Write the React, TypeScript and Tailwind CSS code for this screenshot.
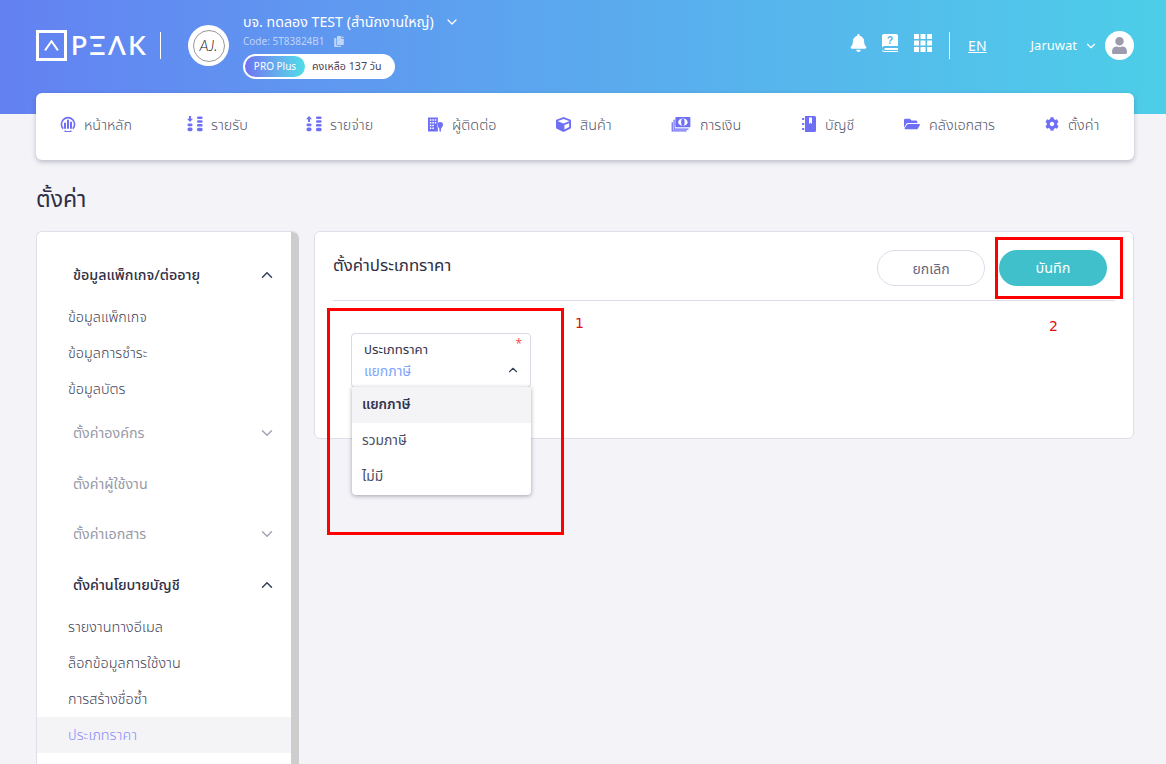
import { ChevronDown, ChevronUp } from 'lucide-react'
import { FaBell, FaCog, FaCopy, FaCube, FaFolderOpen, FaUser } from 'react-icons/fa'
import type { ReactNode } from 'react'

// nav icons that no package has in this shape
function Dashboard() {
  return (
    <svg viewBox="0 0 16 16" className="w-[16px] h-[16px]" fill="none" stroke="currentColor">
      <path d="M3.200 12.800a6.600 6.600 0 1 1 9.600 0" strokeWidth="1.600" />
      <path d="M4.500 14.800a7 7 0 0 0 7 0" strokeWidth="1.400" />
      <path d="M5 7.500v4.500M8 4.500V12M11 6.500V12" strokeWidth="2" strokeLinecap="round" />
    </svg>
  )
}

function Coins({ up }: { up?: boolean }) {
  return (
    <svg viewBox="0 0 16 16" className="w-[16px] h-[16px]" fill="currentColor">
      {up ? <path d="M3 0 6 3.200H4V6H2V3.200H0Z" /> : <path d="M2 0h2v2.800h2L3 6 0 2.800h2Z" />}
      <rect x="0.500" y="7.600" width="5" height="2.600" rx="1.200" />
      <rect x="0.500" y="11.600" width="5" height="3.600" rx="1.600" />
      <rect x="10" y="0.400" width="5.600" height="2.600" rx="1.200" />
      <rect x="10" y="4.200" width="5.600" height="2.600" rx="1.200" />
      <rect x="10" y="8" width="5.600" height="2.600" rx="1.200" />
      <rect x="10" y="11.800" width="5.600" height="3.400" rx="1.500" />
    </svg>
  )
}

function Building() {
  return (
    <svg viewBox="0 0 16 16" className="w-[15px] h-[15px]" fill="currentColor">
      <path fillRule="evenodd" d="M0 .5h10.500V7a3.600 3.600 0 0 0-.6 3.200l.6 1.600V15.500H0ZM2 2.500V4h1.600V2.500Zm2.600 0V4h1.600V2.500Zm2.600 0V4h1.600V2.500ZM2 5.400v1.500h1.600V5.400Zm2.600 0v1.500h1.600V5.400Zm2.600 0v1.500h1.600V5.400ZM2 8.300v1.500h1.600V8.300Zm2.600 0v1.500h1.600V8.300ZM2 11.200v1.500h1.600v-1.500Zm2.600 0v1.500h1.600v-1.500Z" />
      <path d="M13 5.200a3 3 0 0 1 3 3c0 1.800-1.600 3.200-2.200 4.200v3.100h-1.600v-3.100C11.600 11.400 10 10 10 8.200a3 3 0 0 1 3-3Z" />
    </svg>
  )
}

function Money() {
  return (
    <svg viewBox="0 0 20 16" className="w-[20px] h-[15px]">
      <rect x="4" y="0" width="16" height="11" rx="1" fill="currentColor" />
      <ellipse cx="12" cy="5.500" rx="5" ry="4" fill="#fff" />
      <ellipse cx="12" cy="5.500" rx="1.800" ry="4" fill="currentColor" />
      <path d="M2 3h1.300v9.200H18v1.300H2Z" fill="currentColor" />
      <path d="M0 5.500h1.300v8.700H16v1.300H0Z" fill="currentColor" />
    </svg>
  )
}

function Ledger() {
  return (
    <svg viewBox="0 0 14 16" className="w-[14px] h-[16px]" fill="currentColor">
      <path fillRule="evenodd" d="M3 0h9.500A1.500 1.500 0 0 1 14 1.500v13a1.500 1.500 0 0 1-1.500 1.500H3ZM7 1.500V8l1.500-1.200L10 8V1.500Z" />
      <rect x="0" y="2" width="2.200" height="2" rx=".6" />
      <rect x="0" y="7" width="2.200" height="2" rx=".6" />
      <rect x="0" y="12" width="2.200" height="2" rx=".6" />
    </svg>
  )
}

function HelpBook() {
  return (
    <svg viewBox="0 0 16 18" className="w-[16px] h-[18px]">
      <path d="M2 0h12a2 2 0 0 1 2 2v10H2.500a2.500 2.500 0 0 0 0 5H16v1H2.500A2.500 2.500 0 0 1 0 15.500V2a2 2 0 0 1 2-2Z" fill="#fff" />
      <rect x="2.500" y="14" width="13.500" height="2" fill="#fff" />
      <text x="8" y="9.500" textAnchor="middle" fontSize="10" fontWeight="700" fontFamily="'Liberation Sans', sans-serif" fill="#56b2ea">?</text>
    </svg>
  )
}

function Apps() {
  const cells = [0, 6.500, 13]
  return (
    <svg viewBox="0 0 18 18" className="w-[18px] h-[18px]" fill="#fff">
      {cells.map(y => cells.map(x => <rect key={`${x}-${y}`} x={x} y={y} width="5" height="5" />))}
    </svg>
  )
}

const navItems: { label: string; icon: ReactNode; width: string; gap: string }[] = [
  { label: 'หน้าหลัก', icon: <Dashboard />, width: 'w-[127px]', gap: 'gap-[8px]' },
  { label: 'รายรับ', icon: <Coins />, width: 'w-[119px]', gap: 'gap-[8px]' },
  { label: 'รายจ่าย', icon: <Coins up />, width: 'w-[122px]', gap: 'gap-[8px]' },
  { label: 'ผู้ติดต่อ', icon: <Building />, width: 'w-[128px]', gap: 'gap-[9px]' },
  { label: 'สินค้า', icon: <FaCube className="w-[15px] h-[15px]" />, width: 'w-[115px]', gap: 'gap-[9px]' },
  { label: 'การเงิน', icon: <Money />, width: 'w-[131px]', gap: 'gap-[9px]' },
  { label: 'บัญชี', icon: <Ledger />, width: 'w-[102px]', gap: 'gap-[9px]' },
  { label: 'คลังเอกสาร', icon: <FaFolderOpen className="w-[16px] h-[16px]" />, width: 'w-[141px]', gap: 'gap-[9px]' },
  { label: 'ตั้งค่า', icon: <FaCog className="w-[14px] h-[14px]" />, width: 'w-[70px]', gap: 'gap-[9px]' },
]

function SideHeader({ label, open, muted, height = 'h-[50px]' }: { label: string; open?: boolean; muted?: boolean; height?: string }) {
  return (
    <div className={`${height} pl-[36px] pr-[15px] flex items-center justify-between text-[14.3px] ${muted ? 'text-[#9a9aa8]' : 'text-[#2f2f45] font-medium'}`}>
      <span>{label}</span>
      {open === undefined ? null : open
        ? <ChevronUp className="w-[18px] h-[18px] text-[#35405c]" strokeWidth={2} />
        : <ChevronDown className="w-[18px] h-[18px] text-[#a4a4b4]" strokeWidth={2} />}
    </div>
  )
}

function SideItem({ label, active }: { label: string; active?: boolean }) {
  return (
    <div className={`h-[36px] pl-[31px] flex items-center text-[14.4px] font-light ${active ? 'mt-[-1px] bg-[#f4f4f7] text-[#8a8cf8]' : 'pb-[2px] text-[#3f3f55]'}`}>
      {label}
    </div>
  )
}

export default function App() {
  return (
    <div className="relative w-full h-screen overflow-hidden bg-[#f3f3f8] font-['Noto_Sans','Noto_Sans_Thai',sans-serif]">
      {/* Header */}
      <header className="h-[114px] pl-[36px] pr-[32px] flex items-start text-white bg-gradient-to-r from-[#6381f2] to-[#4ccee8]">
        <div className="mt-[30px] flex items-center">
          <div className="w-[31px] h-[31px] border-[3px] border-white flex items-center justify-center">
            <svg viewBox="0 0 14 10" className="w-[15px] h-[11px]" fill="none" stroke="#fff" strokeWidth="1.800"><path d="M1 9.500 7 1l6 8.500" /></svg>
          </div>
          <span aria-label="PEAK" className="ml-[4px] w-[80px] text-[26px] leading-[31px] tracking-[2.500px] font-semibold font-['Lato',sans-serif]">PΞΛK</span>
          <div className="ml-[9px] w-px h-[27px] bg-white" />
        </div>
        <div className="ml-[27px] mt-[25px] w-[41px] h-[41px] rounded-full bg-white flex items-center justify-center">
          <div className="w-[32px] h-[32px] rounded-full border border-[#999] flex items-center justify-center text-[#222] italic font-light text-[15px] font-['Lato',sans-serif]">AJ.</div>
        </div>
        <div className="ml-[14px] mt-[13px] flex flex-col">
          <div className="h-[18px] flex items-center text-[14.2px] leading-[18px]">
            <span>บจ. ทดลอง TEST (สำนักงานใหญ่)</span>
            <ChevronDown className="ml-[10px] w-[16px] h-[16px]" strokeWidth={2} />
          </div>
          <div className="mt-[3px] h-[14px] flex items-center text-[10px] text-white/60">
            <span>Code: 5T83824B1</span>
            <FaCopy className="ml-[9px] w-[10px] h-[11px]" />
          </div>
          <div className="mt-[6px] w-[152px] h-[25px] rounded-full bg-white flex items-center pl-[2px]">
            <span className="w-[60px] h-[21px] rounded-full bg-gradient-to-r from-[#6e72f0] to-[#4ddde6] flex items-center justify-center text-[10px]">PRO Plus</span>
            <span className="ml-[7px] text-[10.7px] text-[#45455c]">คงเหลือ 137 วัน</span>
          </div>
        </div>
        <div className="ml-auto mt-[31px] flex items-center">
          <div className="mb-[6px] flex items-center">
            <FaBell className="w-[17px] h-[18px]" />
            <div className="ml-[15px]"><HelpBook /></div>
            <div className="ml-[16px]"><Apps /></div>
          </div>
          <div className="ml-[17px] w-px h-[27px] bg-white" />
          <span className="ml-[18px] text-[14px] underline">EN</span>
          <span className="ml-[44px] text-[13px]">Jaruwat</span>
          <ChevronDown className="ml-[7px] w-[14px] h-[14px]" strokeWidth={2} />
          <div className="ml-[7px] w-[29px] h-[29px] rounded-full bg-white flex items-center justify-center text-[#9c9cae]">
            <FaUser className="w-[17px] h-[17px]" />
          </div>
        </div>
      </header>

      {/* Main nav */}
      <nav className="ml-[36px] mr-[32px] mt-[-21px] h-[67px] pb-[4px] pl-[24px] rounded-[6px] bg-white shadow-[0_2px_5px_rgba(60,60,90,0.3)] flex items-center relative">
        {navItems.map(item => (
          <div key={item.label} className={`${item.width} ${item.gap} shrink-0 flex items-center`}>
            <span className="text-[#6f6ff6] flex items-center">{item.icon}</span>
            <span className="text-[14.4px] font-light text-[#55556c]">{item.label}</span>
          </div>
        ))}
      </nav>

      <h1 className="ml-[36px] mr-[32px] mt-[20px] h-[36px] leading-[36px] text-[23px] text-[#2f2f45]">ตั้งค่า</h1>

      <div className="ml-[36px] mr-[32px] mt-[15px] flex items-start gap-[15px]">
        {/* Sidebar */}
        <aside className="w-[263px] h-[542px] shrink-0 rounded-t-[6px] bg-white border border-[#dfdfea] border-r-0 flex overflow-hidden">
          <div className="flex-1 pt-[18px]">
            <SideHeader label="ข้อมูลแพ็กเกจ/ต่ออายุ" open />
            <SideItem label="ข้อมูลแพ็กเกจ" />
            <SideItem label="ข้อมูลการชำระ" />
            <SideItem label="ข้อมูลบัตร" />
            <SideHeader label="ตั้งค่าองค์กร" open={false} muted />
            <SideHeader label="ตั้งค่าผู้ใช้งาน" muted height="h-[51px]" />
            <SideHeader label="ตั้งค่าเอกสาร" open={false} muted />
            <SideHeader label="ตั้งค่านโยบายบัญชี" open height="h-[51px]" />
            <SideItem label="รายงานทางอีเมล" />
            <SideItem label="ล็อกข้อมูลการใช้งาน" />
            <SideItem label="การสร้างชื่อซ้ำ" />
            <SideItem label="ประเภทราคา" active />
          </div>
          <div className="w-[8px] bg-[#cdcdcd] rounded-tr-[6px]" />
        </aside>

        {/* Price type card */}
        <section className="flex-1 h-[208px] rounded-[6px] bg-white border border-[#dfdfea] pl-[18px] pr-[18px]">
          <div className="h-[69px] pt-[18px] border-b border-[#dcdce6] flex items-start">
            <h2 className="h-[30px] leading-[30px] text-[16.800px] text-[#2f2f45]">ตั้งค่าประเภทราคา</h2>
            <button className="ml-auto w-[108px] h-[36px] rounded-full border border-[#dcdce8] bg-white text-[14px] text-[#66667c]">ยกเลิก</button>
            <button className="ml-[14px] mr-[8px] w-[108px] h-[36px] rounded-full bg-[#40c0cb] text-[14.4px] text-white">บันทึก</button>
          </div>
          <div className="relative mt-[32px] ml-[18px] w-[180px]">
            <div className="relative h-[55px] rounded-[4px] border border-[#d8d8e6] bg-white pl-[12px] pt-[5px]">
              <div className="h-[20px] leading-[20px] text-[13.2px] text-[#35354c]">ประเภทราคา</div>
              <div className="mt-[2px] h-[20px] leading-[20px] text-[14px] text-[#7ea6fb]">แยกภาษี</div>
              <span className="absolute right-[8px] top-[3px] text-[12px] leading-[14px] text-[#f25555]">*</span>
              <ChevronUp className="absolute right-[10px] top-[29px] w-[14px] h-[14px] text-[#35405c]" strokeWidth={2} />
            </div>
            <div className="absolute left-[1px] right-0 top-[54px] z-10 rounded-b-[4px] bg-white shadow-[0_1px_4px_rgba(40,40,60,0.4)] text-[13.800px] text-[#4d4d63]">
              <div className="h-[36px] pb-[2px] pl-[10px] flex items-center bg-[#f4f4f6] font-semibold text-[#35354c]">แยกภาษี</div>
              <div className="h-[36px] pb-[2px] pl-[10px] flex items-center">รวมภาษี</div>
              <div className="h-[36px] pb-[2px] pl-[10px] flex items-center">ไม่มี</div>
            </div>
          </div>
        </section>
      </div>

      {/* Red annotations drawn over the screenshot */}
      <div className="absolute left-[327px] top-[308px] w-[237px] h-[227px] border-[3px] border-[#ff0000] z-20" />
      <div className="absolute left-[995px] top-[237px] w-[128px] h-[62px] border-[3px] border-[#ff0000] z-20" />
      <span className="absolute left-[575px] top-[315px] text-[14px] leading-[16px] text-[#e01010] font-['DejaVu_Sans',sans-serif]">1</span>
      <span className="absolute left-[1049px] top-[318px] text-[14px] leading-[16px] text-[#e01010] font-['DejaVu_Sans',sans-serif]">2</span>
    </div>
  )
}
